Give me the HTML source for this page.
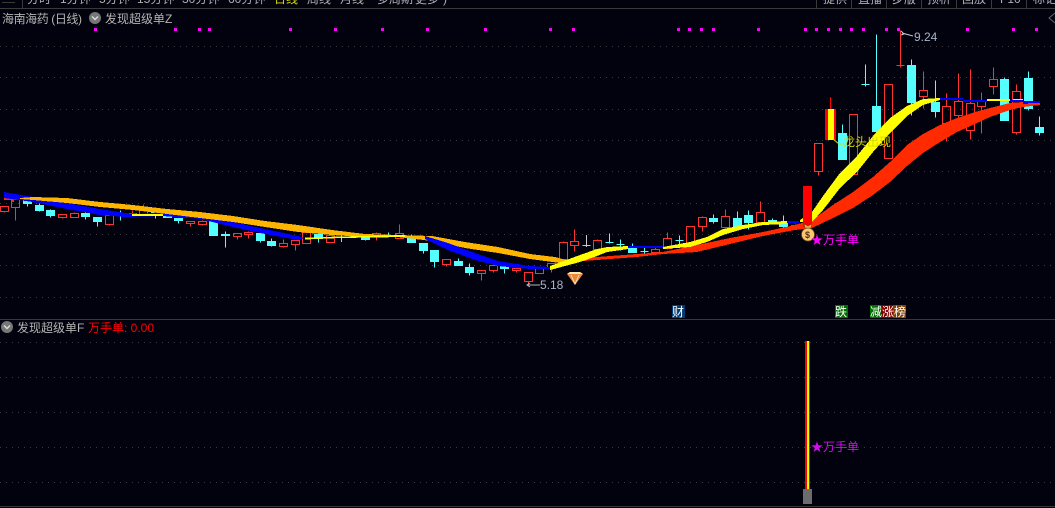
<!DOCTYPE html>
<html><head><meta charset="utf-8"><style>
html,body{margin:0;padding:0;background:#02020e;width:1055px;height:508px;overflow:hidden}
svg{display:block;position:absolute;left:0;top:0}
text{font-family:"Liberation Sans","Noto Sans CJK SC",sans-serif}
</style></head><body>
<svg width="1055" height="508" viewBox="0 0 1055 508" xmlns="http://www.w3.org/2000/svg">
<rect width="1055" height="508" fill="#02020e"/>
<!-- toolbar -->
<g font-size="12" fill="#b0b0b0">
<text x="27" y="3">分时</text><text x="60" y="3">1分钟</text><text x="99" y="3">5分钟</text><text x="137" y="3">15分钟</text><text x="182" y="3">30分钟</text><text x="228" y="3">60分钟</text><text x="274" y="3" fill="#d8d800">日线</text><text x="307" y="3">周线</text><text x="340" y="3">月线</text><text x="377" y="3">多周期</text><text x="415" y="3">更多</text><text x="443" y="3">)</text>
<text x="823" y="3">提供</text><text x="858" y="3">直播</text><text x="892" y="3">步版</text><text x="927" y="3">预析</text><text x="962" y="3">回放</text><text x="1000" y="3">F10</text><text x="1033" y="3">标记</text>
</g>
<path d="M0 8.5H1055M22.5 0V8M2 2.5H15M816.5 0V8M851.5 0V8M886.5 0V8M921.5 0V8M956.5 0V8M991.5 0V8M1026.5 0V8" stroke="#3a3a3a" stroke-width="1" shape-rendering="crispEdges"/>
<!-- grid -->
<g stroke="#3c3c3c" stroke-width="1" stroke-dasharray="1 5" shape-rendering="crispEdges">
<path d="M0 46.5H1055M0 77.5H1055M0 109.5H1055M0 140.5H1055M0 171.5H1055M0 203.5H1055M0 234.5H1055M0 265.5H1055M0 297.5H1055M0 342.5H1055M0 377.5H1055M0 412.5H1055M0 447.5H1055M0 482.5H1055"/>
</g>
<!-- titles -->
<text x="2" y="23" font-size="12" fill="#b4b4b4" textLength="80">海南海药 (日线)</text>
<circle cx="95" cy="18" r="6" fill="#777"/><path d="M92 16.5l3 3 3-3" stroke="#ddd" stroke-width="1.4" fill="none"/>
<text x="105" y="23" font-size="12" fill="#b4b4b4">发现超级单Z</text>
<path d="M1055 13l-6 5 6 5" stroke="#666" fill="none"/>
<!-- magenta dots -->
<path fill="#ff00ff" shape-rendering="crispEdges" d="M94 28h3v3h-3zM174 28h3v3h-3zM198 28h3v3h-3zM208 28h3v3h-3zM289 28h3v3h-3zM334 28h3v3h-3zM381 28h3v3h-3zM426 28h3v3h-3zM484 28h3v3h-3zM549 28h3v3h-3zM572 28h3v3h-3zM677 28h3v3h-3zM688 28h3v3h-3zM700 28h3v3h-3zM712 28h3v3h-3zM757 28h3v3h-3zM804 28h3v3h-3zM815 28h3v3h-3zM827 28h3v3h-3zM839 28h3v3h-3zM850 28h3v3h-3zM862 28h3v3h-3zM885 28h3v3h-3zM897 28h3v3h-3zM966 28h3v3h-3zM1012 28h3v3h-3zM1035 28h3v3h-3z"/>
<!-- red candles -->
<path fill="none" stroke="#ff3232" stroke-width="1" shape-rendering="crispEdges" d="
M0.5 206.5H8.5V211.5H0.5ZM4.5 211.5V212.5
M11.5 199.5H19.5V207.5H11.5ZM15.5 207.5V220.5
M58.5 214.5H66.5V217.5H58.5ZM62.5 217.5V218.5
M70.5 213.5H78.5V217.5H70.5ZM74.5 212.5V213.5
M105.5 215.5H113.5V224.5H105.5ZM109.5 224.5V225.5
M128.5 213.5H136.5V215.5H128.5ZM132.5 210.5V213.5
M139.5 207.5H147.5V215.5H139.5ZM143.5 204.5V207.5
M186.5 221.5H194.5V223.5H186.5ZM190.5 223.5V226.5
M198.5 221.5H206.5V224.5H198.5ZM202.5 220.5V221.5M202.5 224.5V225.5
M233.5 233.5H241.5V236.5H233.5ZM237.5 236.5V239.5
M244.5 232.5H252.5V234.5H244.5ZM248.5 231.5V232.5M248.5 234.5V238.5
M279.5 243.5H287.5V246.5H279.5ZM283.5 239.5V243.5M283.5 246.5V247.5
M291.5 240.5H299.5V244.5H291.5ZM295.5 244.5V250.5
M302.5 232.5H310.5V243.5H302.5Z
M326.5 235.5H334.5V242.5H326.5Z
M349.5 233.5H357.5V237.5H349.5ZM353.5 232.5V233.5
M372.5 233.5H380.5V236.5H372.5ZM376.5 232.5V233.5M376.5 236.5V240.5
M395.5 233.5H403.5V238.5H395.5ZM399.5 224.5V233.5
M442.5 259.5H450.5V264.5H442.5ZM446.5 264.5V266.5
M477.5 270.5H485.5V273.5H477.5ZM481.5 273.5V280.5
M489.5 265.5H497.5V270.5H489.5ZM493.5 270.5V272.5
M512.5 268.5H520.5V270.5H512.5ZM516.5 270.5V272.5
M524.5 272.5H532.5V281.5H524.5ZM528.5 281.5V285.5
M535.5 267.5H543.5V273.5H535.5Z
M547.5 263.5H555.5V268.5H547.5ZM551.5 268.5V272.5
M559.5 242.5H567.5V259.5H559.5ZM563.5 241.5V242.5
M570.5 241.5H578.5V245.5H570.5ZM574.5 229.5V241.5M574.5 245.5V251.5
M593.5 240.5H601.5V249.5H593.5ZM597.5 239.5V240.5
M651.5 249.5H659.5V252.5H651.5ZM655.5 246.5V249.5
M663.5 238.5H671.5V248.5H663.5ZM667.5 232.5V238.5M667.5 248.5V249.5
M686.5 226.5H694.5V243.5H686.5Z
M698.5 217.5H706.5V226.5H698.5ZM702.5 216.5V217.5M702.5 226.5V231.5
M721.5 216.5H729.5V227.5H721.5ZM725.5 209.5V216.5
M756.5 212.5H764.5V222.5H756.5ZM760.5 201.5V212.5M760.5 222.5V225.5
M791.5 225.5H799.5V228.5H791.5ZM795.5 224.5V225.5
M814.5 143.5H822.5V171.5H814.5ZM818.5 171.5V175.5
M849.5 114.5H857.5V174.5H849.5Z
M884.5 84.5H892.5V158.5H884.5Z
M896.5 65.5H904.5M900.5 30.5V67.5
M919.5 90.5H927.5V96.5H919.5ZM923.5 71.5V90.5M923.5 96.5V108.5
M942.5 106.5H950.5V123.5H942.5ZM946.5 93.5V106.5M946.5 123.5V141.5
M954.5 101.5H962.5V115.5H954.5ZM958.5 73.5V101.5M958.5 115.5V130.5
M966.5 103.5H974.5V130.5H966.5ZM970.5 69.5V103.5M970.5 130.5V139.5
M977.5 100.5H985.5V106.5H977.5ZM981.5 92.5V100.5M981.5 106.5V133.5
M989.5 79.5H997.5V86.5H989.5ZM993.5 67.5V79.5M993.5 86.5V94.5
M1012.5 91.5H1020.5V132.5H1012.5ZM1016.5 84.5V91.5M1016.5 132.5V134.5
"/>
<!-- cyan candles -->
<path fill="#55ffff" stroke="#55ffff" stroke-width="1" shape-rendering="crispEdges" d="
M23.5 200.5H31.5V203.5H23.5ZM27.5 203.5V206.5
M35.5 205.5H43.5V210.5H35.5ZM39.5 203.5V205.5M39.5 210.5V211.5
M46.5 210.5H54.5V215.5H46.5ZM50.5 209.5V210.5M50.5 215.5V217.5
M81.5 213.5H89.5V216.5H81.5ZM85.5 206.5V213.5M85.5 216.5V219.5
M93.5 217.5H101.5V221.5H93.5ZM97.5 221.5V226.5
M116.5 213.5H124.5M120.5 210.5V220.5
M151.5 208.5H159.5V215.5H151.5ZM155.5 215.5V218.5
M163.5 213.5H171.5V217.5H163.5Z
M174.5 218.5H182.5V220.5H174.5ZM178.5 220.5V223.5
M209.5 221.5H217.5V235.5H209.5Z
M221.5 234.5H229.5V235.5H221.5ZM225.5 231.5V247.5
M256.5 233.5H264.5V240.5H256.5ZM260.5 240.5V242.5
M267.5 241.5H275.5V245.5H267.5ZM271.5 238.5V241.5M271.5 245.5V246.5
M314.5 234.5H322.5V238.5H314.5ZM318.5 238.5V242.5
M361.5 237.5H369.5V239.5H361.5ZM365.5 239.5V240.5
M384.5 235.5H392.5V236.5H384.5ZM388.5 232.5V235.5
M407.5 238.5H415.5V242.5H407.5ZM411.5 234.5V238.5
M419.5 243.5H427.5V250.5H419.5ZM423.5 250.5V253.5
M430.5 250.5H438.5V261.5H430.5ZM434.5 261.5V267.5
M454.5 261.5H462.5V265.5H454.5ZM458.5 258.5V261.5
M465.5 267.5H473.5V272.5H465.5ZM469.5 263.5V267.5M469.5 272.5V275.5
M500.5 266.5H508.5V268.5H500.5ZM504.5 268.5V273.5
M605.5 242.5H613.5M609.5 233.5V243.5
M616.5 244.5H624.5M620.5 239.5V250.5
M628.5 247.5H636.5V252.5H628.5ZM632.5 243.5V247.5
M640.5 251.5H648.5M644.5 247.5V253.5
M675.5 240.5H683.5M679.5 235.5V245.5
M709.5 218.5H717.5V221.5H709.5ZM713.5 214.5V218.5M713.5 221.5V223.5
M733.5 218.5H741.5V226.5H733.5ZM737.5 211.5V218.5
M744.5 215.5H752.5V222.5H744.5ZM748.5 210.5V215.5M748.5 222.5V229.5
M768.5 220.5H776.5V223.5H768.5ZM772.5 218.5V220.5
M779.5 223.5H787.5V226.5H779.5ZM783.5 215.5V223.5M783.5 226.5V228.5
M838.5 133.5H846.5V159.5H838.5ZM842.5 124.5V133.5
M861.5 84.5H869.5M865.5 64.5V86.5
M872.5 106.5H880.5V131.5H872.5ZM876.5 34.5V106.5M876.5 131.5V145.5
M907.5 65.5H915.5V102.5H907.5ZM911.5 59.5V65.5M911.5 102.5V115.5
M931.5 102.5H939.5V111.5H931.5ZM935.5 80.5V102.5M935.5 111.5V117.5
M1000.5 79.5H1008.5V120.5H1000.5ZM1004.5 77.5V79.5
M1024.5 78.5H1032.5V108.5H1024.5ZM1028.5 71.5V78.5M1028.5 108.5V110.5
M1035.5 127.5H1043.5V132.5H1035.5ZM1039.5 116.5V127.5M1039.5 132.5V135.5
"/>
<path stroke="#c8c8c8" fill="none" shape-rendering="crispEdges" d="M337.5 237.5H345.5M341.5 235V242M582.5 245.5H590.5M586.5 235V247"/>
<path stroke="#3030ff" fill="none" shape-rendering="crispEdges" d="M791 222.5H799M795 222V224"/>
<!-- big special candles -->
<path fill="#ff0000" shape-rendering="crispEdges" d="M825 109h11v31h-11zM830 97h1v12h-1z"/>
<rect x="828" y="109" width="6" height="31" fill="#ffff00" shape-rendering="crispEdges"/>
<!-- bands -->
<g shape-rendering="crispEdges">
<path fill="#ff2a00" d="M4 197h29v3H14v2h-2v-2H4z"/>
<polygon fill="#0000ff" points="4,192 33,197 67,203 100,209 125,213 140,214 163,212 175,213 200,215 233,222 265,229 298,236 304,238 298,240 265,234 233,227 200,219 175,217 163,216 125,217 100,215 67,209 33,202 4,198"/>
<polygon fill="#ffb400" points="20,198 33,197 67,198 100,202 133,205 167,209 200,212 233,216 265,221 298,225 332,230 365,234 398,235 432,236 465,242 498,247 530,254 555,257 570,261 560,263 530,259 498,253 465,248 432,241 398,237 365,237 332,235 298,232 265,227 233,222 200,218 167,214 133,210 100,207 67,203 33,200 20,199"/>
<path fill="#ffff00" d="M132 214h31v2h-31z"/>
<polygon fill="#ffff00" points="305,237.5 340,236.5 405,235 405,237 340,238 305,239.5"/>
<polygon fill="#0000ff" points="425,236 448,243 475,253 498,261 530,266 550,267 550,269 530,269 498,266 475,260 448,250 425,239"/>
<polygon fill="#ff2a00" points="570,259 597,257 637,254 663,252 697,245 730,238 763,232 795,225 812,220 833,205 853,192 873,177 890,162 907,145 923,134 940,125 957,118 975,112 990,108 1010,103 1023,102 1040,103 1040,105 1023,107 1010,110 990,117 975,124 957,132 940,142 923,153 907,166 890,182 873,195 853,208 833,218 812,228 795,230 763,236 730,244 697,252 663,254 637,257 597,260 570,262"/>
<polygon fill="#ffff00" points="550,266 580,255 597,249 607,247 628,246 628,249 607,252 597,256 580,262 550,270"/>
<path fill="#0000ff" d="M628 246h35v2h-35z"/>
<polygon fill="#ffff00" points="663,247 690,242 707,237 723,229 743,225 763,222 787,221 787,224 763,225 743,229 723,235 707,242 690,247 663,249"/>
<path fill="#0000ff" d="M787 221h12v2h-12z"/>
<polygon fill="#ffff00" points="800,220 812,212 823,196 840,173 857,156 873,136 890,118 907,106 923,99 940,98 940,100 923,105 907,116 890,133 873,152 857,172 840,188 823,210 812,222 800,222"/>
<path fill="#0000ff" d="M940 98h23v2h-23zM963 100h24v2h-24zM1010 100h13v2h-13zM1023 101h17v3h-17z"/>
<path fill="#ffff00" d="M987 99h23v2h-23zM1013 99h10v1h-10z"/>
<path fill="#ff2a00" d="M1028 103h12v2h-12z"/>
</g>
<path fill="#ff0000" shape-rendering="crispEdges" d="M803 186h9v41h-9z"/>
<!-- labels -->
<path d="M527 285h13M530 283l-3 2 3 2" stroke="#b4b4b4" fill="none"/>
<text x="540" y="289" font-size="12" fill="#a8b4c8">5.18</text>
<polygon points="567,274 570,272 580,272 583,274 575,285" fill="#e88a3a"/><path d="M567 274h16l-3-2h-10z" fill="#ffe8b8"/><path d="M571 275l4 9 4-9" stroke="#fff0d0" stroke-width=".8" fill="none"/>
<path d="M901 31l3 3-3 1M902 33l11 3" stroke="#c8c8c8" fill="none"/>
<text x="914" y="41" font-size="12" fill="#a8b4c8">9.24</text>
<path d="M833 139l6 5h5" stroke="#d8d800" fill="none"/>
<text x="843" y="146" font-size="12" fill="#d8d800">龙头出现</text>
<!-- money bag -->
<ellipse cx="808" cy="234.5" rx="6.5" ry="6.5" fill="#f6c878" stroke="#7a4a10" stroke-width=".8"/>
<path d="M804 224l4 2 4-2-1 4h-6z" fill="#f0b050" stroke="#7a4a10" stroke-width=".6"/>
<text x="805" y="238" font-size="9" font-weight="bold" fill="#503000">$</text>
<text x="811" y="244" font-size="12" fill="#ff00ff">★万手单</text>
<!-- tags -->
<g shape-rendering="crispEdges">
<rect x="672" y="305" width="13" height="13" fill="#003c74"/>
<rect x="835" y="305" width="13" height="13" fill="#007000"/>
<rect x="870" y="305" width="12" height="13" fill="#007000"/>
<rect x="881" y="305" width="12" height="13" fill="#800000"/>
<rect x="893" y="305" width="13" height="13" fill="#804000"/>
</g>
<g font-size="12" fill="#fff"><text x="672" y="316">财</text><text x="835" y="316">跌</text><text x="870" y="316">减</text><text x="882" y="316">涨</text><text x="894" y="316">榜</text></g>
<!-- lower panel -->
<path d="M0 319.5H1055M0 506.5H1055" stroke="#383838" shape-rendering="crispEdges"/>
<circle cx="7" cy="327" r="6" fill="#777"/><path d="M4 325.5l3 3 3-3" stroke="#ddd" stroke-width="1.4" fill="none"/>
<text x="17" y="332" font-size="12" fill="#b4b4b4">发现超级单F</text>
<text x="88" y="332" font-size="12" fill="#ff0000">万手单: 0.00</text>
<g shape-rendering="crispEdges">
<rect x="805" y="341" width="5" height="148" fill="#ff0000"/>
<rect x="807" y="341" width="2" height="148" fill="#ffff00"/>
<rect x="803" y="489" width="9" height="15" fill="#6c6c6c"/>
</g>
<text x="811" y="451" font-size="12" fill="#d010f0">★万手单</text>
</svg>
</body></html>
